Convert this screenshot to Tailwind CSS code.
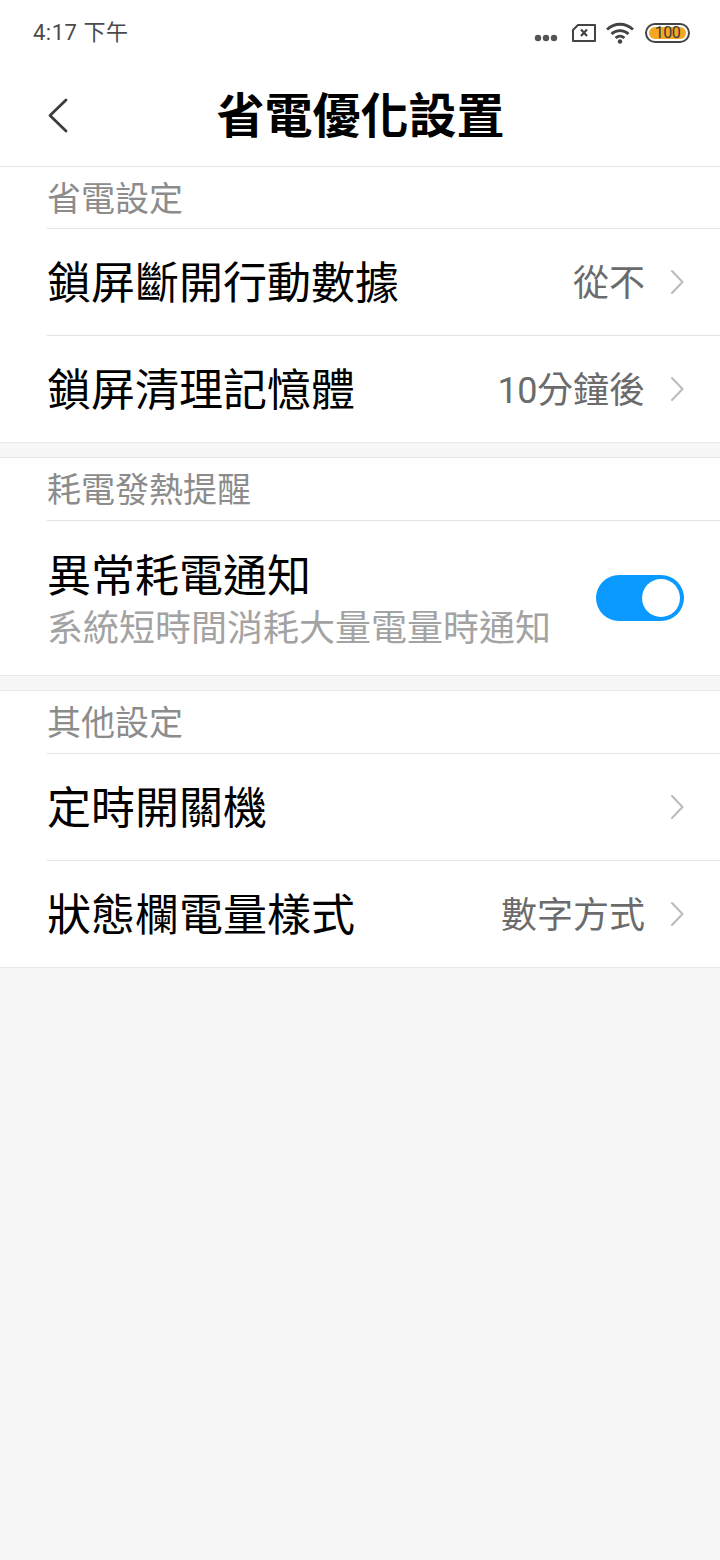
<!DOCTYPE html>
<html lang="zh-Hant">
<head>
    <meta charset="UTF-8">
    <meta name="viewport" content="width=device-width, initial-scale=1.0">
    <title>省電優化設置</title>
    <script src="https://cdn.jsdelivr.net/npm/@tailwindcss/browser@4"></script>
</head>
<body class="bg-[#f7f7f7] h-[1560px] w-[720px] overflow-hidden font-['Roboto','Noto_Sans_CJK_TC',sans-serif]">
    <div class="bg-white border-b border-[#e8e8e8]">
        <!-- Status bar -->
        <div class="h-[66px] flex items-center justify-between pl-[33px] pr-[30px]">
            <span class="text-[22px] leading-none text-[#4a4a4a] tracking-[0.5px]">4:17 下午</span>
            <div class="flex items-center">
                <svg width="24" height="8" viewBox="0 0 24 8" class="mt-[10px] mr-[13px]" fill="#555">
                    <circle cx="4" cy="4" r="3.2"/><circle cx="12" cy="4" r="3.2"/><circle cx="20" cy="4" r="3.2"/>
                </svg>
                <svg width="26" height="20" viewBox="0 0 26 20" class="mr-[8px]" fill="none" stroke="#444" stroke-width="2">
                    <path d="M7 2H24V18H2V7Z" stroke-linejoin="round"/>
                    <path d="M10 6.5L16 13M16 6.5L10 13" stroke-width="2.2"/>
                </svg>
                <svg width="30" height="24" viewBox="0 0 30 24" class="mr-[10px]" fill="none" stroke="#444" stroke-width="2.8">
                    <path d="M2 8.5C9.5 1.5 20.5 1.5 28 8.5"/>
                    <path d="M6.5 13C11.5 8.5 18.5 8.5 23.5 13"/>
                    <path d="M10.5 17C13.5 14.5 16.5 14.5 19.5 17"/>
                    <circle cx="15" cy="20.5" r="2.2" fill="#444" stroke="none"/>
                </svg>
                <div class="w-[45px] h-[20px] rounded-full border-2 border-[#444] p-[2px] flex">
                    <div class="flex-1 rounded-full bg-[#f5a623] flex items-center justify-center text-[16px] leading-none text-[#3a3a3a] tracking-[-0.5px]">100</div>
                </div>
            </div>
        </div>
        <!-- Header -->
        <div class="h-[100px] relative flex items-center justify-center border-b border-[#e3e3e3] box-content">
            <svg width="24" height="36" viewBox="0 0 24 36" class="absolute left-[47px] top-[32px]" fill="none" stroke="#3c3c3c" stroke-width="2.8" stroke-linecap="round" stroke-linejoin="round">
                <path d="M19 2L3 17.5L19 33"/>
            </svg>
            <h1 class="text-[48px] font-bold leading-none text-black mt-[1px] ml-[1px]">省電優化設置</h1>
        </div>

        <!-- 省電設定 -->
        <div class="h-[61px] pl-[47px] flex items-center text-[34px] leading-none text-[#8c8c8c] pt-[2px]">省電設定</div>
        <div class="ml-[47px] h-[106px] border-t border-[#e3e3e3] flex items-center pr-[36px] box-content">
            <span class="text-[44px] leading-none text-black flex-1 mt-[3px]">鎖屏斷開行動數據</span>
            <span class="text-[36px] leading-none text-[#6b6b6b] mr-[25px] mt-[3px]">從不</span>
            <svg width="14" height="26" viewBox="0 0 14 26" fill="none" stroke="#bbbbbb" stroke-width="2" stroke-linecap="round" stroke-linejoin="round"><path d="M2 2L12.5 13L2 24"/></svg>
        </div>
        <div class="ml-[47px] h-[106px] border-t border-[#e3e3e3] flex items-center pr-[36px] box-content">
            <span class="text-[44px] leading-none text-black flex-1 mt-[3px]">鎖屏清理記憶體</span>
            <span class="text-[36px] leading-none text-[#6b6b6b] mr-[25px] mt-[3px]"><span class="tracking-[-0.5px]">10</span>分鐘後</span>
            <svg width="14" height="26" viewBox="0 0 14 26" fill="none" stroke="#bbbbbb" stroke-width="2" stroke-linecap="round" stroke-linejoin="round"><path d="M2 2L12.5 13L2 24"/></svg>
        </div>
    </div>

    <div class="mt-[14px] bg-white border-y border-[#e8e8e8]">
        <!-- 耗電發熱提醒 -->
        <div class="h-[62px] pl-[47px] flex items-center text-[34px] leading-none text-[#8c8c8c] pt-[2px]">耗電發熱提醒</div>
        <div class="ml-[47px] h-[154px] border-t border-[#e3e3e3] flex items-center pr-[36px] box-content">
            <div class="flex-1 mt-[5px]">
                <div class="text-[44px] leading-none text-black mb-[12px]">異常耗電通知</div>
                <div class="text-[36px] leading-none text-[#a3a3a3]">系統短時間消耗大量電量時通知</div>
            </div>
            <div class="w-[88px] h-[46px] rounded-full bg-[#0a99ff] flex items-center justify-end pr-[4px]">
                <div class="w-[38px] h-[38px] rounded-full bg-white"></div>
            </div>
        </div>
    </div>

    <div class="mt-[14px] bg-white border-y border-[#e8e8e8]">
        <!-- 其他設定 -->
        <div class="h-[62px] pl-[47px] flex items-center text-[34px] leading-none text-[#8c8c8c] pt-[2px]">其他設定</div>
        <div class="ml-[47px] h-[106px] border-t border-[#e3e3e3] flex items-center pr-[36px] box-content">
            <span class="text-[44px] leading-none text-black flex-1 mt-[3px]">定時開關機</span>
            <svg width="14" height="26" viewBox="0 0 14 26" fill="none" stroke="#bbbbbb" stroke-width="2" stroke-linecap="round" stroke-linejoin="round"><path d="M2 2L12.5 13L2 24"/></svg>
        </div>
        <div class="ml-[47px] h-[106px] border-t border-[#e3e3e3] flex items-center pr-[36px] box-content">
            <span class="text-[44px] leading-none text-black flex-1 mt-[3px]">狀態欄電量樣式</span>
            <span class="text-[36px] leading-none text-[#6b6b6b] mr-[25px] mt-[3px]">數字方式</span>
            <svg width="14" height="26" viewBox="0 0 14 26" fill="none" stroke="#bbbbbb" stroke-width="2" stroke-linecap="round" stroke-linejoin="round"><path d="M2 2L12.5 13L2 24"/></svg>
        </div>
    </div>
</body>
</html>
